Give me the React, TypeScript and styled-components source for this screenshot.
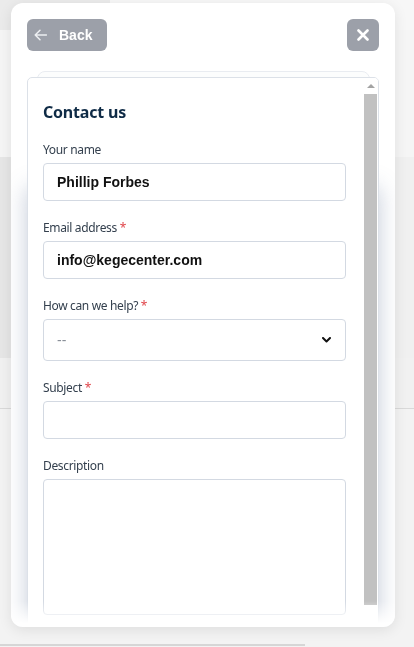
import styled, { createGlobalStyle } from "styled-components"

const GlobalStyle = createGlobalStyle`
    html,
    body {
        margin: 0;
        padding: 0;
    }
    body {
        background: #f3f3f3;
        font-family: "Noto Sans", "Open Sans", sans-serif;
        overflow: hidden;
    }
    * {
        box-sizing: border-box;
    }
`

/* dimmed page behind the modal */
const Backdrop = styled.div`
    display: flex;
    flex-direction: column;
    height: 647px;
`
const BgTopRow = styled.div`
    display: flex;
    height: 30px;
    background: #f7f7f7;
`
const BgTab = styled.div`
    width: 110px;
    background: #ebebeb;
`
const BgHero = styled.div`
    height: 127px;
    background: #f5f5f5;
`
const BgBlockRow = styled.div`
    display: flex;
    height: 201px;
    background: #f0f0f0;
`
const BgBlock = styled.div`
    width: 380px;
    background: #e6e6e6;
`
const BgBand = styled.div`
    height: 51px;
    background: #f1f1f1;
    border-bottom: 1px solid #d9d9d9;
`
const BgFooter = styled.div`
    flex: 1;
    display: flex;
    flex-direction: column;
    justify-content: flex-end;
    padding-bottom: 1px;
`
const BgRule = styled.div`
    width: 305px;
    height: 2px;
    background: #d6d6d6;
`

/* modal */
const Overlay = styled.div`
    position: fixed;
    inset: 0;
    display: flex;
    padding: 3px 19px 20px 11px;
`
const Card = styled.section`
    position: relative;
    flex: 1;
    display: flex;
    flex-direction: column;
    padding: 16px 16px 0;
    background: #fff;
    border-radius: 12px;
    box-shadow: 0 3px 14px rgba(0, 0, 0, 0.09);
    overflow: hidden;

    &::after {
        content: "";
        position: absolute;
        left: 0;
        right: 0;
        bottom: 0;
        height: 26px;
        background: linear-gradient(rgba(255, 255, 255, 0), #fff 85%);
        pointer-events: none;
    }
`
const Header = styled.header`
    display: flex;
    align-items: center;
    justify-content: space-between;
    flex: none;
    height: 32px;
    margin-bottom: 20px;
`
const BackButton = styled.button`
    display: flex;
    align-items: center;
    gap: 12px;
    height: 32px;
    padding: 0 15px 0 7px;

    border: 0;
    border-radius: 6px;
    background: #9ca0a9;
    color: #fff;

    font: 700 14px "Liberation Sans", Arial, sans-serif;
    cursor: pointer;
`
const CloseButton = styled.button`
    display: flex;
    align-items: center;
    justify-content: center;
    width: 32px;
    height: 32px;
    padding: 0;

    border: 0;
    border-radius: 6px;
    background: #9ca0a9;
    cursor: pointer;
`
const PanelWrap = styled.div`
    position: relative;
    flex: none;
    padding-top: 6px;

    &::before {
        content: "";
        position: absolute;
        top: 0;
        left: 10px;
        right: 9px;
        height: 24px;
        border: 1px solid #e9ecf1;
        border-radius: 8px;
        background: #fcfdfd;
    }
`
const Panel = styled.div`
    position: relative;
    display: flex;
    height: 575px;
    overflow: hidden;

    background: #fff;
    border: 1px solid #dce1e8;
    border-radius: 5px 5px 0 0;
    box-shadow: 0 110px 22px rgba(88, 108, 146, 0.34);
`
const ScrollRail = styled.div`
    display: flex;
    flex-direction: column;
    flex: none;
    width: 15px;
    background: #fff;
`
const RailArrow = styled.div`
    display: flex;
    align-items: center;
    justify-content: center;
    height: 16px;
`
const RailThumb = styled.div`
    height: 511px;
    margin: 0 1px;
    background: #c1c1c1;
`
const Form = styled.form`
    display: flex;
    flex-direction: column;
    flex: 1;
    min-width: 0;
    gap: 18px;
    padding: 22px 17px 70px 15px;
`
const Title = styled.h2`
    margin: 0 0 -1px;
    font: 700 16px/24px "Noto Sans", "Open Sans", sans-serif;
    color: #0f2b46;
    letter-spacing: -0.2px;
`
const Field = styled.label`
    display: flex;
    flex-direction: column;
    gap: 4px;
`
const LabelText = styled.span`
    font: 400 12px/18px "Noto Sans", "Open Sans", sans-serif;
    letter-spacing: -0.35px;
    color: #34404e;
`
const Required = styled.span`
    color: #e0454a;
`
const inputBase = `
    width: 100%;
    border: 1px solid #d3d9e2;
    border-radius: 4px;
    background: #fff;
    outline: none;
    padding: 0 13px;
    font-family: "Liberation Sans", Arial, sans-serif;
    font-size: 14px;
`
const TextInput = styled.input`
    ${inputBase}
    height: 38px;
    font-weight: 700;
    color: #111;
`
const SelectWrap = styled.div`
    position: relative;
`
const Select = styled.select`
    ${inputBase}
    display: block;
    height: 42px;
    appearance: none;
    color: #8a9099;
`
const Chevron = styled.svg`
    position: absolute;
    right: 15px;
    top: 50%;
    transform: translateY(-50%);
    pointer-events: none;
`
const TextArea = styled.textarea`
    ${inputBase}
    display: block;
    height: 136px;
    resize: none;
`

function ArrowLeftIcon() {
    return (
        <svg width="13" height="12" viewBox="0 0 13 12" fill="none">
            <path
                d="M12.5 6H1.2M6 1.2 1.2 6 6 10.8"
                stroke="#eceef1"
                strokeWidth="1.5"
                strokeLinecap="round"
                strokeLinejoin="round"
            />
        </svg>
    )
}

function CloseIcon() {
    return (
        <svg width="12" height="12" viewBox="0 0 12 12" fill="none">
            <path
                d="M1.5 1.5l9 9M10.5 1.5l-9 9"
                stroke="#fff"
                strokeWidth="2.6"
                strokeLinecap="round"
            />
        </svg>
    )
}

export default function App() {
    return (
        <>
            <GlobalStyle />
            <Backdrop>
                <BgTopRow>
                    <BgTab />
                </BgTopRow>
                <BgHero />
                <BgBlockRow>
                    <BgBlock />
                </BgBlockRow>
                <BgBand />
                <BgFooter>
                    <BgRule />
                </BgFooter>
            </Backdrop>

            <Overlay>
                <Card>
                    <Header>
                        <BackButton type="button">
                            <ArrowLeftIcon />
                            Back
                        </BackButton>
                        <CloseButton type="button" aria-label="Close">
                            <CloseIcon />
                        </CloseButton>
                    </Header>

                    <PanelWrap>
                        <Panel>
                            <Form>
                                <Title>Contact us</Title>

                                <Field>
                                    <LabelText>Your name</LabelText>
                                    <TextInput defaultValue="Phillip Forbes" />
                                </Field>

                                <Field>
                                    <LabelText>
                                        Email address <Required>*</Required>
                                    </LabelText>
                                    <TextInput defaultValue="info@kegecenter.com" />
                                </Field>

                                <Field>
                                    <LabelText>
                                        How can we help? <Required>*</Required>
                                    </LabelText>
                                    <SelectWrap>
                                        <Select defaultValue="">
                                            <option value="">--</option>
                                            <option value="question">Question</option>
                                            <option value="problem">Problem</option>
                                        </Select>
                                        <Chevron width="9" height="6" viewBox="0 0 9 6" fill="none">
                                            <path
                                                d="M1 1l3.5 3.5L8 1"
                                                stroke="#111"
                                                strokeWidth="2"
                                                strokeLinecap="round"
                                                strokeLinejoin="round"
                                            />
                                        </Chevron>
                                    </SelectWrap>
                                </Field>

                                <Field>
                                    <LabelText>
                                        Subject <Required>*</Required>
                                    </LabelText>
                                    <TextInput />
                                </Field>

                                <Field>
                                    <LabelText>Description</LabelText>
                                    <TextArea />
                                </Field>
                            </Form>

                            <ScrollRail aria-hidden="true">
                                <RailArrow>
                                    <svg width="8" height="4" viewBox="0 0 8 4">
                                        <path d="M0 4 4 0 8 4Z" fill="#a3a3a3" />
                                    </svg>
                                </RailArrow>
                                <RailThumb />
                            </ScrollRail>
                        </Panel>
                    </PanelWrap>
                </Card>
            </Overlay>
        </>
    )
}
